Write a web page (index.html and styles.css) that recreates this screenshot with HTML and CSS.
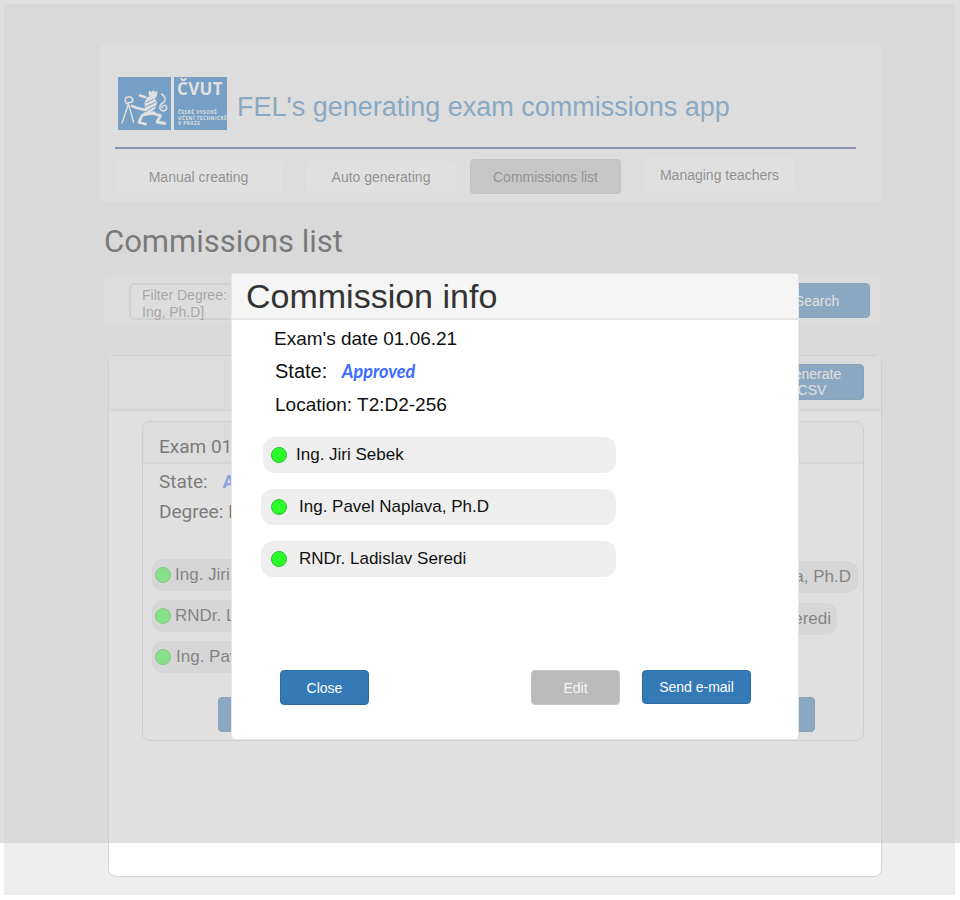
FILE: index.html
```html
<!DOCTYPE html>
<html lang="en">
<head>
<meta charset="utf-8">
<title>Commissions list</title>
<link rel="stylesheet" href="styles.css">
</head>
<body>
<div class="page">
  <header class="app-header">
    <div class="brand">
      <svg class="logo" viewBox="0 0 109 53" width="109" height="53" aria-label="CVUT logo">
        <rect x="0" y="0" width="53" height="53" fill="#0065bd"/>
        <rect x="56" y="0" width="53" height="53" fill="#0065bd"/>
        <g fill="none" stroke="#fff" stroke-linecap="round" stroke-linejoin="round">
          <path d="M10.5 27 L4 46 M10.5 27 L15.5 45" stroke-width="1.4"/>
          <path d="M9 27 C6 24 7 20 10 20 C13 19 16 22 14 25 L10 26" stroke-width="1.7"/>
          <path d="M27 20 L22 18.5" stroke-width="2.4"/>
          <path d="M27 33 L19 31 L14 29" stroke-width="2.6"/>
          <path d="M30 36 L24 38.5 L21 45.5 L27.5 47" stroke-width="2.8"/>
          <path d="M33 36 L42.5 38.5 L39 45 L47 46.5" stroke-width="2.8"/>
          <path d="M27 37 L36 36" stroke-width="3.4"/>
          <path d="M43.5 17 C47 19 48.5 22.5 46 25 C42 27 41 30 42.5 32.5 C45 35.5 49.5 33 48.5 30 C47.5 27.5 44.5 28 44 30.5" stroke-width="1.5"/>
        </g>
        <path d="M29 20 L36 20 L39 25 L37 32 L31 36 L27 33 L26.5 26 Z" fill="#fff"/>
        <path d="M27.5 26 L36 22 M27 30 L38 25 M29 33.5 L37.5 29" fill="none" stroke="#0065bd" stroke-width=".9"/>
        <path d="M30.5 17 L31 13.5 L33.5 15 L35.5 13 L37 15 L39.5 14 L39 19 L36.5 22 L32 21.5 Z" fill="#fff"/>
        <text class="logo-big" x="59" y="18">ČVUT</text>
        <text class="logo-small" x="60" y="37">ČESKÉ VYSOKÉ</text>
        <text class="logo-small" x="60" y="42.5">UČENÍ TECHNICKÉ</text>
        <text class="logo-small" x="60" y="48">V PRAZE</text>
      </svg>
      <span class="app-title">FEL's generating exam commissions app</span>
    </div>
    <hr class="rule">
    <nav class="tabs">
      <a class="tab tab-manual">Manual creating</a>
      <a class="tab tab-auto">Auto generating</a>
      <a class="tab tab-list">Commissions list</a>
      <a class="tab tab-teachers">Managing teachers</a>
    </nav>
  </header>

  <h1 class="page-title">Commissions list</h1>

  <section class="filter-bar">
    <div class="filter-input">Filter Degree:<br>Ing, Ph.D]</div>
    <button class="btn btn-search">Search</button>
  </section>

  <section class="list-card">
    <div class="list-head">
      <button class="btn btn-csv">Generate<br>CSV</button>
    </div>
    <article class="exam">
      <div class="exam-head">Exam 01.06.21</div>
      <div class="exam-body">
        <div class="exam-line">State: <b class="state-mini">Approved</b></div>
        <div class="exam-line exam-degree">Degree: Ing</div>
        <div class="members">
          <div class="member-col">
            <div class="mini-pill"><i class="dot"></i>Ing. Jiri Sebek</div>
            <div class="mini-pill"><i class="dot"></i>RNDr. Ladislav Seredi</div>
            <div class="mini-pill pill-pavel"><i class="dot"></i>Ing. Pavel Naplava</div>
          </div>
          <div class="member-col member-right">
            <div class="mini-pill pill-r1">Ing. Pavel Naplava, Ph.D</div>
            <div class="mini-pill pill-r2">RNDr. Ladislav Seredi</div>
          </div>
        </div>
        <div class="exam-actions">
          <button class="btn btn-exam">Show</button>
          <button class="btn btn-exam">Edit</button>
        </div>
      </div>
    </article>
  </section>
</div>

<div class="overlay"></div>

<div class="modal">
  <div class="modal-head">Commission info</div>
  <div class="modal-body">
    <p class="info info-date">Exam's date 01.06.21</p>
    <p class="info info-state">State: <b class="state">Approved</b></p>
    <p class="info info-loc">Location: T2:D2-256</p>
    <div class="pill pill-a"><i class="dot dot-on"></i>Ing. Jiri Sebek</div>
    <div class="pill pill-b"><i class="dot dot-on"></i>Ing. Pavel Naplava, Ph.D</div>
    <div class="pill pill-b"><i class="dot dot-on"></i>RNDr. Ladislav Seredi</div>
    <div class="modal-actions">
      <button class="btn btn-modal btn-close">Close</button>
      <button class="btn btn-modal btn-edit">Edit</button>
      <button class="btn btn-modal btn-send">Send e-mail</button>
    </div>
  </div>
</div>
</body>
</html>
```
FILE: styles.css
```css
* { box-sizing: border-box; }
html, body { margin: 0; padding: 0; }
body {
  background: #fff;
  font-family: "Liberation Sans", Arial, sans-serif;
  height: 900px;
  overflow: hidden;
}
.page {
  margin: 4px 5px 0 4px;
  height: 891px;
  background: #eee;
  padding: 40px 73px 0 96px;
}
.app-header {
  background: #f7f7f7;
  border: 1px solid #f4f4f4;
  border-radius: 4px;
  height: 158px;
  padding: 32px 0 0 14px;
}
.brand { display: flex; align-items: center; margin-left: 3px; height: 53px; }
.logo { flex: none; }
.logo-big { font: 700 17px "Open Sans", sans-serif; fill: #fff; letter-spacing: .3px; }
.logo-small { font: 700 4.6px "Open Sans", sans-serif; fill: #fff; letter-spacing: .55px; }
.app-title { margin: 8px 0 0 10px; font-size: 27px; color: #337ab7; white-space: nowrap; }
.rule { margin: 17px 25px 0 0; border: 0; border-top: 2px solid #32468f; }
.tabs { display: flex; font-size: 14px; color: #444; }
.tab { display: flex; align-items: center; justify-content: center; background: #fff; border-radius: 4px; }
.tab-manual { width: 167px; height: 31px; margin-top: 12px; }
.tab-auto { width: 150px; height: 31px; margin: 12px 0 0 24px; }
.tab-list { width: 151px; height: 35px; margin: 10px 0 0 14px; background: #c4c4c4; border: 1px solid #bbb; }
.tab-teachers { width: 149px; height: 33px; margin: 9px 0 0 24px; }
.page-title { margin: 22px 0 0 4px; font: 400 31px/36px Roboto, sans-serif; color: #0a0a0a; }
.filter-bar {
  margin: 16px 0 0 3px;
  height: 51px;
  background: #f5f5f5;
  border: 1px solid #eee;
  border-radius: 4px;
  display: flex;
  justify-content: space-between;
  padding: 6px 11px 0 25px;
}
.filter-input {
  width: 300px;
  height: 37px;
  background: #f8f8f8;
  border: 2px solid #d8d8d8;
  border-radius: 6px;
  padding: 2px 11px;
  font-size: 14px;
  line-height: 17px;
  color: #777;
}
.btn {
  border: 1px solid #2e6da4;
  border-radius: 4px;
  background: #337ab7;
  color: #fff;
  font: 14px "Liberation Sans", Arial, sans-serif;
  padding: 0;
}
.btn-search { width: 106px; height: 35px; }
.list-card {
  margin: 28px 0 0 8px;
  height: 522px;
  background: #fff;
  border: 1px solid #d4d4d4;
  border-radius: 8px;
}
.list-head {
  height: 55px;
  background: #f5f5f5;
  border-bottom: 2px solid #e4e4e4;
  display: flex;
  justify-content: flex-end;
  padding: 8px 17px 0 0;
}
.btn-csv { width: 104px; height: 36px; line-height: 16px; }
.exam {
  margin: 10px 17px 0 33px;
  height: 320px;
  border: 1px solid #d4d4d4;
  border-radius: 8px;
}
.exam-head {
  height: 42px;
  background: #f5f5f5;
  border-bottom: 2px solid #e4e4e4;
  border-radius: 8px 8px 0 0;
  padding: 13px 16px 0;
  font: 19px/24px Roboto, sans-serif;
  color: #0a0a0a;
}
.exam-body { padding: 7px 0 0 9px; }
.exam-line { margin-left: 7px; font: 19px/22px Roboto, sans-serif; color: #0a0a0a; }
.state-mini { margin-left: 10px; color: #3a6cff; }
.exam-degree { margin-top: 8px; }
.members { display: flex; justify-content: space-between; margin-top: 36px; padding-right: 5px; }
.member-col { display: flex; flex-direction: column; gap: 9px; }
.member-right { align-items: flex-end; }
.mini-pill {
  display: flex;
  align-items: center;
  height: 32px;
  background: #e8e8e8;
  border-radius: 10px;
  padding: 0 10px 0 3px;
  font-size: 17px;
  color: #222;
}
.pill-pavel .dot { margin-right: 5px; }
.pill-r1 { margin-top: 2px; padding-right: 7px; }
.pill-r2 { margin: 1px 21px 0 0; padding-right: 6px; }
.exam-actions { display: flex; justify-content: space-between; margin: 24px 48px 0 66px; }
.exam-actions .btn-exam { width: 120px; height: 35px; }
.dot {
  flex: none;
  width: 16px;
  height: 16px;
  margin-right: 4px;
  border-radius: 50%;
  background: #2bff2b;
  border: 1px solid #28c028;
}
.overlay {
  position: absolute;
  left: 0;
  top: 0;
  width: 960px;
  height: 843px;
  background: rgba(202, 202, 202, .58);
}
.modal {
  position: absolute;
  left: 231px;
  top: 273px;
  width: 568px;
  height: 467px;
  background: #fff;
  border: 1px solid #e6e6e6;
  border-radius: 4px;
  color: #111;
}
.modal-head {
  height: 46px;
  background: #f5f5f5;
  border-bottom: 2px solid #e4e4e4;
  padding-left: 14px;
  font-size: 34px;
  line-height: 44px;
  color: #333;
}
.info { margin: 0; font-size: 19px; line-height: 22px; }
.info-date { margin: 8px 0 0 42px; }
.info-state { margin: 10px 0 0 43px; font-size: 20px; }
.state {
  margin-left: 9px;
  font: italic 700 18px/22px Lato, sans-serif;
  color: #3a6cff;
}
.info-loc { margin: 12px 0 0 43px; }
.pill {
  display: flex;
  align-items: center;
  height: 36px;
  background: #eee;
  border-radius: 12px;
  font-size: 17px;
}
.pill-a { margin: 21px 0 16px 31px; width: 353px; padding-left: 8px; }
.pill-b { margin: 0 0 16px 29px; width: 355px; padding-left: 10px; }
.dot-on { margin-right: 12px; }
.pill-a .dot-on { margin-right: 9px; }
.modal-actions { display: flex; align-items: flex-start; margin: 93px 0 0 48px; }
.btn-modal { width: 89px; height: 35px; font-size: 14px; }
.btn-edit { margin-left: 162px; background: #bbb; border-color: #c4c4c4; color: #f4f4f4; }
.btn-send { width: 109px; height: 34px; margin-left: 22px; }
```
